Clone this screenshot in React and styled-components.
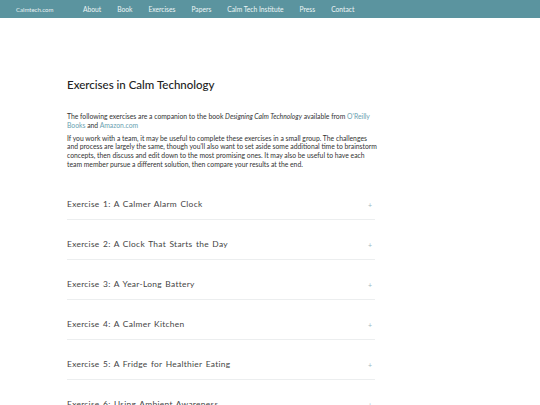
import React from "react";
import styled, { createGlobalStyle } from "styled-components";

const GlobalStyle = createGlobalStyle`
  html, body {
    margin: 0;
    padding: 0;
    background: #ffffff;
    font-family: Lato, "Noto Sans", sans-serif;
    color: #444;
    overflow: hidden;
  }
`;

const Header = styled.header`
  height: 18px;
  background: #5b949f;
  display: flex;
  align-items: center;
  padding-left: 16px;
`;

const Brand = styled.a`
  color: #e8f1f3;
  font-size: 6px;
  width: 67px;
  text-decoration: none;
`;

const Nav = styled.nav`
  display: flex;
  gap: 16px;
`;

const NavLink = styled.a`
  color: #eef5f6;
  font-size: 6.7px;
  text-decoration: none;
`;

const Main = styled.main`
  width: 310px;
  margin: 0 0 0 67px;
  padding-top: 60px;
`;

const Title = styled.h1`
  font-size: 11.5px;
  font-weight: 500;
  color: #222;
  margin: 0 0 21px;
`;

const Para = styled.p`
  font-size: 6.8px;
  line-height: 8.8px;
  color: #333;
  margin: 0 0 4px;
`;

const Link = styled.a`
  color: #6aa1b0;
  text-decoration: none;
`;

const List = styled.div`
  width: 308px;
  margin-top: 11px;
  display: flex;
  flex-direction: column;
`;

const Item = styled.div`
  height: 40px;
  display: flex;
  align-items: flex-end;
  justify-content: space-between;
  padding-bottom: 10px;
  border-bottom: 1px solid #eceeef;
  box-sizing: border-box;
`;

const ItemTitle = styled.span`
  font-size: 8.4px;
  letter-spacing: 0.3px;
  word-spacing: 1px;
  color: #444;
`;

const Plus = styled.span`
  font-size: 7px;
  color: #9bb8bf;
  margin-right: 3px;
`;

const exercises = [
  "Exercise 1: A Calmer Alarm Clock",
  "Exercise 2: A Clock That Starts the Day",
  "Exercise 3: A Year-Long Battery",
  "Exercise 4: A Calmer Kitchen",
  "Exercise 5: A Fridge for Healthier Eating",
  "Exercise 6: Using Ambient Awareness",
];

export default function App() {
  return (
    <>
      <GlobalStyle />
      <Header>
        <Brand href="#">Calmtech.com</Brand>
        <Nav>
          <NavLink href="#">About</NavLink>
          <NavLink href="#">Book</NavLink>
          <NavLink href="#">Exercises</NavLink>
          <NavLink href="#">Papers</NavLink>
          <NavLink href="#">Calm Tech Institute</NavLink>
          <NavLink href="#">Press</NavLink>
          <NavLink href="#">Contact</NavLink>
        </Nav>
      </Header>
      <Main>
        <Title>Exercises in Calm Technology</Title>
        <Para>
          The following exercises are a companion to the book <em>Designing Calm Technology</em> available from{" "}
          <Link href="#">O'Reilly Books</Link> and <Link href="#">Amazon.com</Link>
        </Para>
        <Para>
          If you work with a team, it may be useful to complete these exercises in a small group. The challenges and
          process are largely the same, though you'll also want to set aside some additional time to brainstorm
          concepts, then discuss and edit down to the most promising ones.  It may also be useful to have each team
          member pursue a different solution, then compare your results at the end.
        </Para>
        <List>
          {exercises.map((e) => (
            <Item key={e}>
              <ItemTitle>{e}</ItemTitle>
              <Plus>+</Plus>
            </Item>
          ))}
        </List>
      </Main>
    </>
  );
}
